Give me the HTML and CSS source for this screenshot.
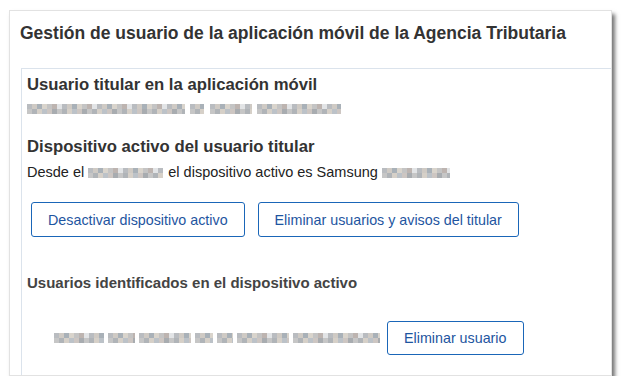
FILE: index.html
```html
<!DOCTYPE html>
<html lang="es">
<head>
    <meta charset="UTF-8">
    <meta name="viewport" content="width=device-width, initial-scale=1.0">
    <title>Gestión de usuario</title>
    <link rel="stylesheet" href="styles.css">
</head>
<body>

    <div class="window">
        <h1 class="title">Gestión de usuario de la aplicación móvil de la Agencia Tributaria</h1>

        <div class="panel">
            <h2>Usuario titular en la aplicación móvil</h2>
            <p class="masked">
                <span class="pix pix-a"></span>
                <span class="pix pix-b"></span>
                <span class="pix pix-c"></span>
                <span class="pix pix-d"></span>
            </p>

            <h2>Dispositivo activo del usuario titular</h2>
            <p class="info">Desde el <span class="pix pix-date"></span> el dispositivo activo es Samsung <span class="pix pix-model"></span></p>

            <div class="actions">
                <button type="button">Desactivar dispositivo activo</button>
                <button type="button">Eliminar usuarios y avisos del titular</button>
            </div>

            <h3>Usuarios identificados en el dispositivo activo</h3>
            <div class="user-row">
                <span class="masked">
                    <span class="pix pix-u1"></span>
                    <span class="pix pix-u2"></span>
                    <span class="pix pix-u3"></span>
                    <span class="pix pix-u4"></span>
                    <span class="pix pix-u5"></span>
                    <span class="pix pix-u6"></span>
                    <span class="pix pix-u7"></span>
                </span>
                <button type="button">Eliminar usuario</button>
            </div>
        </div>
    </div>

</body>
</html>
```

FILE: styles.css
```css
* {
    box-sizing: border-box;
}
body {
    font-family: "Liberation Sans", Arial, sans-serif;
    margin: 0;
    padding: 0;
    background-color: white;
    color: #222;
}
.window {
    width: 603px;
    height: 366px;
    margin: 10px 0 0 9px;
    border: 1px solid #e2e2e2;
    overflow: hidden;
    background-color: white;
    box-shadow: 3px 4px 4px rgba(0, 0, 0, 0.55);
}
.title {
    margin: 0;
    padding: 12px 10px 0;
    font-size: 17.5px;
    line-height: 20px;
    font-weight: bold;
    color: #333;
    height: 57px;
}
.panel {
    margin: 0 -20px 0 11px;
    padding: 6px 0 0 5px;
    border-top: 1px solid #dbe3ec;
    border-left: 1px solid #dbe3ec;
    height: 320px;
}
h2 {
    margin: 0;
    font-size: 16.7px;
    line-height: 20px;
    font-weight: bold;
    color: #333;
}
h3 {
    margin: 36px 0 0;
    font-size: 15px;
    line-height: 20px;
    font-weight: bold;
    color: #444;
}
p {
    margin: 0;
}
.masked {
    line-height: 20px;
}
p.masked {
    margin: 3px 0 19px;
}
.info {
    font-size: 14.5px;
    line-height: 20px;
    margin-top: 5px;
}

/* texto pixelado (datos ocultos) */
.pix {
    display: inline-block;
    height: 10px;
    vertical-align: -1px;
    margin-right: 1px;
    background:
        repeating-linear-gradient(90deg, #b9bcc0 0 5px, #cfcac4 5px 10px, #a9b1b8 10px 15px, #d9d4cc 15px 20px, #c4c4c4 20px 25px, #bdb4b0 25px 30px, #e2e4e6 30px 35px) top / 100% 5px no-repeat,
        repeating-linear-gradient(90deg, #c6c6c6 0 5px, #b0b4b8 5px 10px, #d6d0c8 10px 15px, #bcc2c8 15px 20px, #cdc6c2 20px 25px, #a8acb0 25px 30px) bottom / 100% 5px no-repeat;
}
.pix-a { width: 158px; }
.pix-b { width: 14px; }
.pix-c { width: 42px; }
.pix-d { width: 84px; }
.pix-date { width: 75px; }
.pix-model { width: 68px; }
.pix-u1 { width: 50px; }
.pix-u2 { width: 27px; }
.pix-u3 { width: 52px; }
.pix-u4 { width: 18px; }
.pix-u5 { width: 16px; }
.pix-u6 { width: 52px; }
.pix-u7 { width: 87px; }

.actions {
    display: flex;
    gap: 13px;
    margin: 20px 0 0 4px;
}
button {
    font-family: "Liberation Sans", Arial, sans-serif;
    font-size: 14.3px;
    color: #1e55a0;
    background-color: white;
    border: 1px solid #1a66b8;
    border-radius: 3px;
    padding: 0 16px;
    height: 35px;
    cursor: pointer;
}
button:hover {
    background-color: #eef4fb;
}
.user-row {
    display: flex;
    align-items: center;
    gap: 7px;
    margin: 28px 0 0 27px;
}
.user-row .masked {
    display: flex;
    gap: 4px;
}
.user-row .pix {
    margin: 0;
}
.user-row button {
    height: 34px;
}
```
